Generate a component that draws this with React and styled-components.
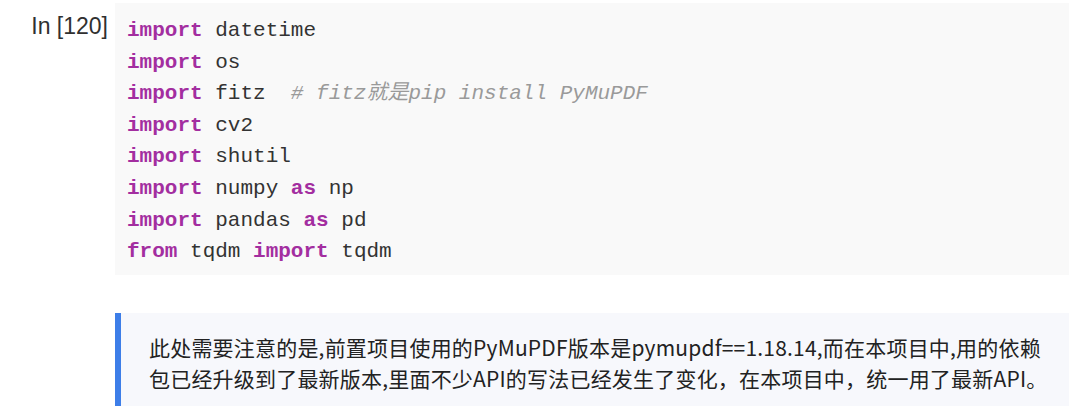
import React from 'react'
import styled, { createGlobalStyle } from 'styled-components'

const GlobalStyle = createGlobalStyle`
  html, body {
    margin: 0;
    padding: 0;
    background: #ffffff;
  }
`

const lines = [
  [['k', 'import'], ['t', ' datetime']],
  [['k', 'import'], ['t', ' os']],
  [['k', 'import'], ['t', ' fitz  '], ['c', '# fitz就是pip install PyMuPDF']],
  [['k', 'import'], ['t', ' cv2']],
  [['k', 'import'], ['t', ' shutil']],
  [['k', 'import'], ['t', ' numpy '], ['k', 'as'], ['t', ' np']],
  [['k', 'import'], ['t', ' pandas '], ['k', 'as'], ['t', ' pd']],
  [['k', 'from'], ['t', ' tqdm '], ['k', 'import'], ['t', ' tqdm']],
]

function App() {
  return (
    <>
      <GlobalStyle />
      <Page>
        <Cell>
          <Prompt>In [120]</Prompt>
          <CodeBox>
            {lines.map((line, i) => (
              <CodeLine key={i}>
                {line.map(([kind, text], j) => (
                  <Token key={j} $kind={kind}>{text}</Token>
                ))}
              </CodeLine>
            ))}
          </CodeBox>
        </Cell>
        <Note>
          此处需要注意的是,前置项目使用的PyMuPDF版本是pymupdf==1.18.14,而在本项目中,用的依赖包已经升级到了最新版本,里面不少API的写法已经发生了变化，在本项目中，统一用了最新API。
        </Note>
      </Page>
    </>
  )
}

const Page = styled.div`
  width: 1080px;
  height: 406px;
  overflow: hidden;
  padding-top: 3px;
  box-sizing: border-box;
`

const Cell = styled.div`
  display: flex;
  align-items: flex-start;
`

const Prompt = styled.div`
  width: 115px;
  box-sizing: border-box;
  padding-right: 7px;
  padding-top: 10px;
  text-align: right;
  font-family: "Liberation Sans", Arial, sans-serif;
  font-size: 23px;
  line-height: 26px;
  color: #303030;
`

const CodeBox = styled.div`
  width: 954px;
  height: 272px;
  box-sizing: border-box;
  background: #f9f9f9;
  padding: 12px 0 0 12px;
`

const CodeLine = styled.div`
  font-family: "Liberation Mono", "Noto Sans CJK SC", monospace;
  font-size: 21px;
  line-height: 31.6px;
  white-space: pre;
  color: #333333;
`

const Token = styled.span`
  color: ${p => (p.$kind === 'k' ? '#a32ea0' : p.$kind === 'c' ? '#9a9a9a' : '#333333')};
  font-weight: ${p => (p.$kind === 'k' ? 700 : 400)};
  font-style: ${p => (p.$kind === 'c' ? 'italic' : 'normal')};
`

const Note = styled.div`
  margin: 38px 0 0 115px;
  width: 954px;
  box-sizing: border-box;
  background: #f7f8fc;
  border-left: 6px solid #3d7ee8;
  padding: 19px 18px 20px 28px;
  font-family: "Noto Sans CJK SC", "Noto Sans", sans-serif;
  font-size: 21px;
  line-height: 31px;
  letter-spacing: 0.2px;
  color: #222222;
`

export default App
